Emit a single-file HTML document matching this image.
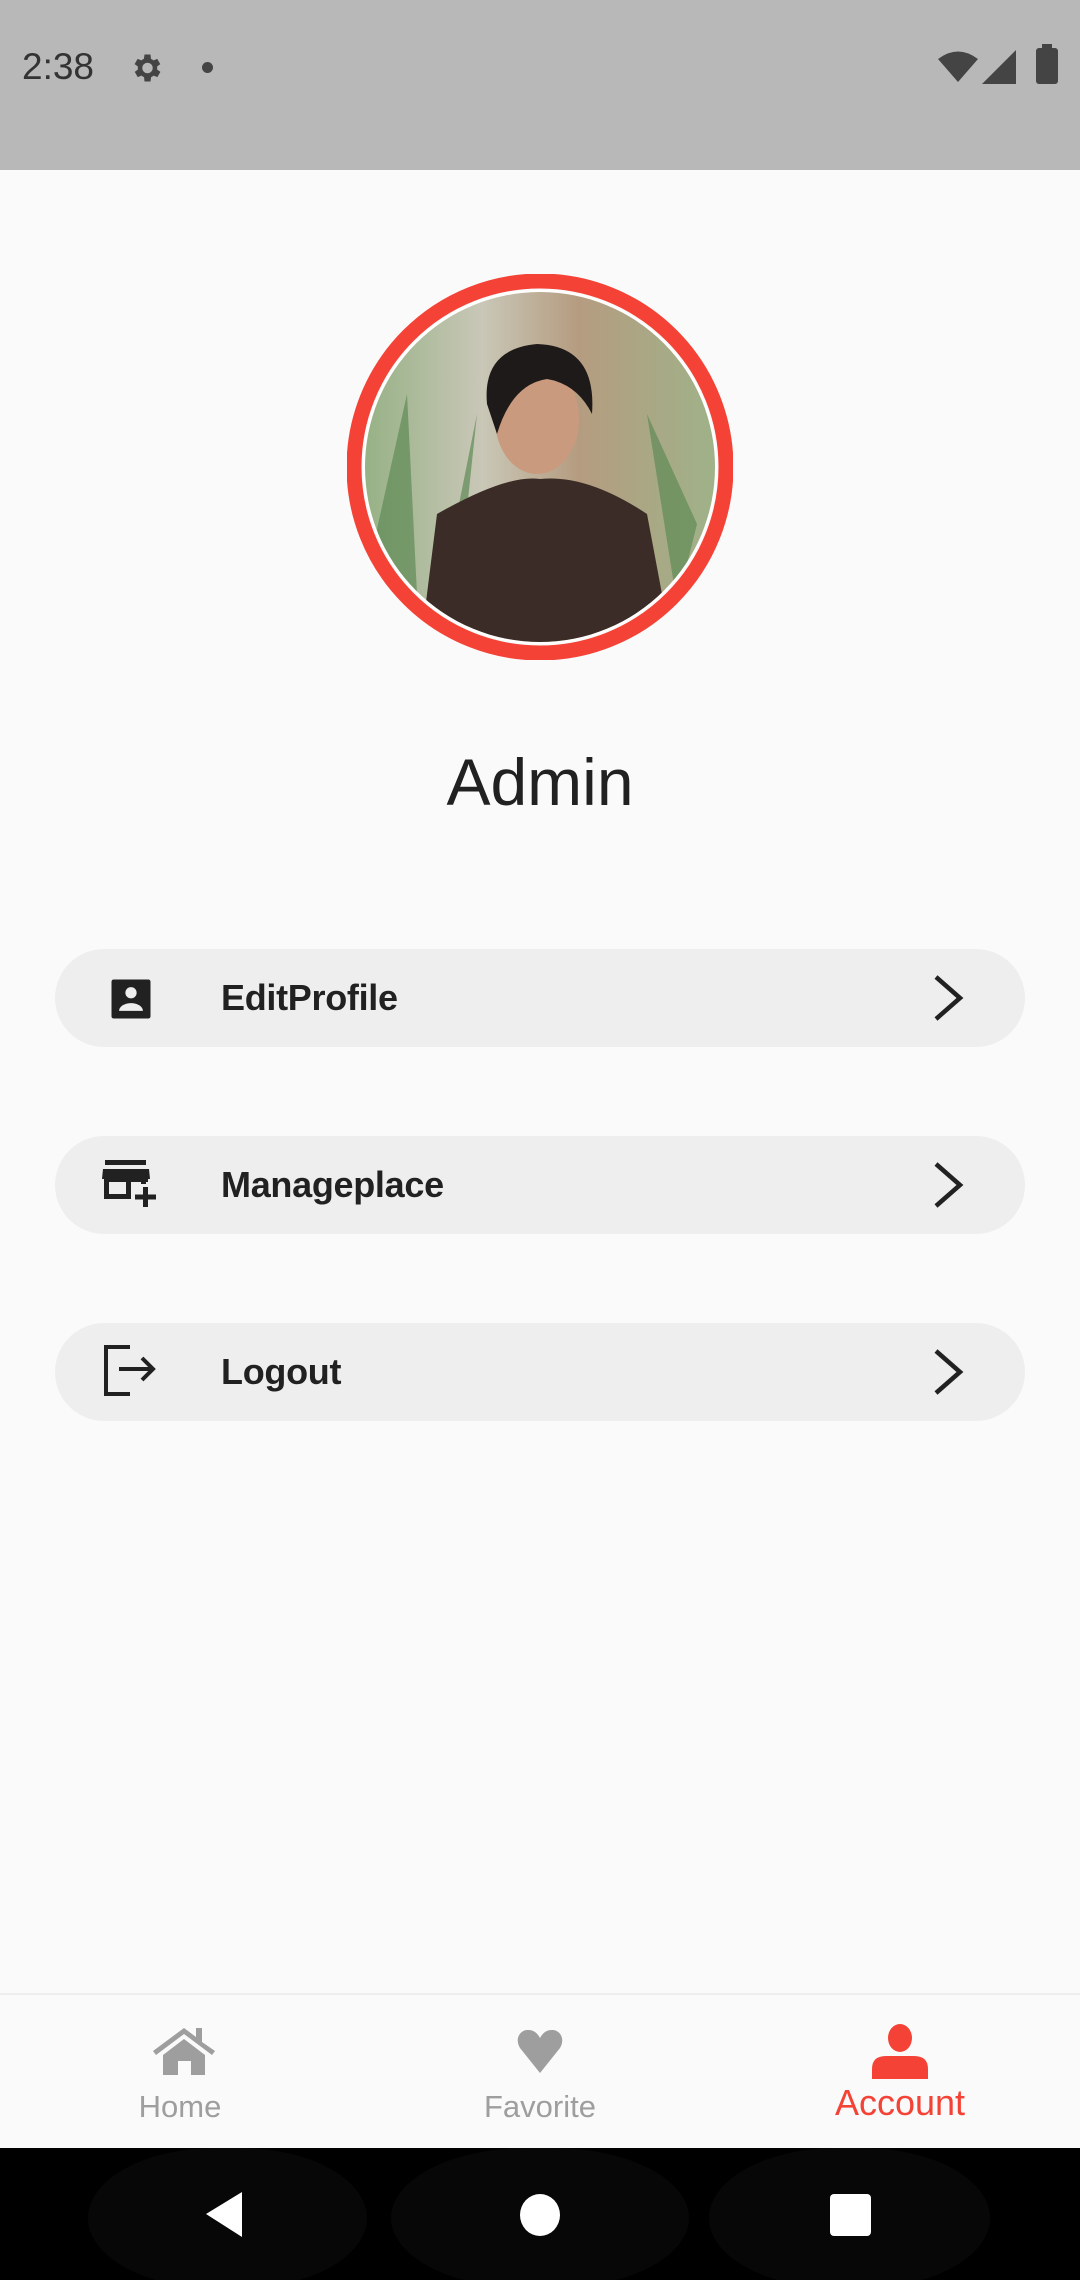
<!DOCTYPE html>
<html><head><meta charset="utf-8"><style>
*{margin:0;padding:0;box-sizing:border-box}
html,body{width:1080px;height:2280px;overflow:hidden}
body{background:#fafafa;font-family:"Liberation Sans",Roboto,sans-serif;position:relative}
.sb{position:absolute;left:0;top:0;width:1080px;height:170px;background:#b8b8b8}
.btn{position:absolute;left:55px;width:970px;height:98px;background:#eeeeee;border-radius:49px}
.btn .t{position:absolute;left:166px;top:0;line-height:98px;font-size:36px;font-weight:bold;color:#212121;letter-spacing:-0.3px}
.btn svg.ic{position:absolute;left:50px;top:24px}
.btn svg.ch{position:absolute;left:877px;top:25px}
.nav{position:absolute;left:0;top:1993px;width:1080px;height:155px;background:#fafafa;border-top:2px solid #eeeeee}
.lbl{position:absolute;font-size:31px;color:#9e9e9e;text-align:center;width:200px}
.sys{position:absolute;left:0;top:2148px;width:1080px;height:132px;background:#000;overflow:hidden}
.pill{position:absolute;top:0;height:140px;background:#070707;border-radius:50%/55%}
</style></head><body>
<div class="sb">
 <div style="position:absolute;left:22px;top:46px;font-size:37px;color:#333">2:38</div>
 <svg style="position:absolute;left:128px;top:50px" width="36" height="36" viewBox="0 0 24 24"><path fill="#444" d="M19.4 13a7.5 7.5 0 000-2l2.1-1.6-2-3.5-2.5 1a7 7 0 00-1.7-1L15 3h-4l-.4 2.9a7 7 0 00-1.7 1l-2.5-1-2 3.5L6.6 11a7.5 7.5 0 000 2l-2.1 1.6 2 3.5 2.5-1a7 7 0 001.7 1L11 21h4l.4-2.9a7 7 0 001.7-1l2.5 1 2-3.5zM13 15.5A3.5 3.5 0 1113 8.5a3.5 3.5 0 010 7z"/></svg>
 <div style="position:absolute;left:202px;top:62px;width:11px;height:11px;border-radius:50%;background:#444"></div>
 <svg style="position:absolute;left:938px;top:50px" width="40" height="34" viewBox="0 0 40 34"><path fill="#444" d="M20 32L0 9Q20-6 40 9z"/></svg>
 <svg style="position:absolute;left:982px;top:50px" width="34" height="34" viewBox="0 0 34 34"><path fill="#444" d="M34 0V34H0z"/></svg>
 <div style="position:absolute;left:1036px;top:48px;width:22px;height:36px;background:#444;border-radius:3px"></div>
 <div style="position:absolute;left:1042px;top:44px;width:10px;height:5px;background:#444"></div>
</div>

<svg style="position:absolute;left:347px;top:274px" width="386" height="386" viewBox="0 0 386 386">
 <defs><clipPath id="c"><circle cx="193" cy="193" r="175"/></clipPath>
 <linearGradient id="bg" x1="0" y1="0" x2="1" y2="0"><stop offset="0" stop-color="#8fae7e"/><stop offset=".35" stop-color="#c9c7b7"/><stop offset=".6" stop-color="#b59c80"/><stop offset="1" stop-color="#9cb58a"/></linearGradient></defs>
 <circle cx="193" cy="193" r="186" fill="none" stroke="#f44336" stroke-width="15"/>
 <circle cx="193" cy="193" r="177" fill="#fff"/>
 <g clip-path="url(#c)">
  <rect width="386" height="386" fill="url(#bg)"/>
  <path d="M20 300L60 120L70 320zM330 330L300 140L350 250zM90 340L130 140L110 330z" fill="#5f8a55" opacity=".7"/>
  <path d="M70 400L90 240Q160 200 193 205Q240 200 300 240L330 400z" fill="#3b2c27"/>
  <ellipse cx="190" cy="145" rx="42" ry="55" fill="#c99a7e"/>
  <path d="M140 130Q135 75 190 70Q250 72 245 140Q230 110 200 105Q165 110 150 160z" fill="#1f1a1a"/>
 </g>
</svg>

<div style="position:absolute;left:0;width:1080px;top:744px;text-align:center;font-size:66px;color:#212121">Admin</div>

<div class="btn" style="top:949px">
 <svg class="ic" width="52" height="52" viewBox="0 0 24 24"><path fill="#212121" d="M4 3h16a1 1 0 011 1v16a1 1 0 01-1 1H4a1 1 0 01-1-1V4a1 1 0 011-1zm8 3.5a2.6 2.6 0 100 5.2 2.6 2.6 0 000-5.2zM6.5 17.5h11c0-2.3-3-3.6-5.5-3.6s-5.5 1.3-5.5 3.6z"/></svg>
 <div class="t">EditProfile</div>
 <svg class="ch" width="34" height="48" viewBox="0 0 34 48"><path d="M4 3L28 24 4 45" fill="none" stroke="#212121" stroke-width="4.5"/></svg>
</div>
<div class="btn" style="top:1136px">
 <svg class="ic" width="64" height="56" viewBox="0 0 64 56" style="left:46px;top:20px"><rect x="4" y="4" width="41" height="5" fill="#212121"/><path d="M2 13h46l1 10H1z" fill="#212121"/><path d="M3 23h44v3H3zM3 23h5v20H3zM8 38h22v5H8zM25 23h5v15h-5zM40 23h5v5h-5z" fill="#212121"/><path d="M42 31h5v20h-5zM34 38.5h21v5H34z" fill="#212121"/></svg>
 <div class="t">Manageplace</div>
 <svg class="ch" width="34" height="48" viewBox="0 0 34 48"><path d="M4 3L28 24 4 45" fill="none" stroke="#212121" stroke-width="4.5"/></svg>
</div>
<div class="btn" style="top:1323px">
 <svg class="ic" width="64" height="56" viewBox="0 0 64 56" style="left:46px;top:20px"><path d="M29 4H5v47h24" fill="none" stroke="#212121" stroke-width="4"/><path d="M18 26h33M41 15l11 11-11 11" fill="none" stroke="#212121" stroke-width="4"/></svg>
 <div class="t">Logout</div>
 <svg class="ch" width="34" height="48" viewBox="0 0 34 48"><path d="M4 3L28 24 4 45" fill="none" stroke="#212121" stroke-width="4.5"/></svg>
</div>

<div class="nav">
 <svg style="position:absolute;left:152px;top:31px" width="64" height="50" viewBox="0 0 64 50"><path fill="#9e9e9e" d="M1 25L32 2l12 9V2h6v14l13 9-3 4L32 8 4 29zM11 29L32 13l21 16v20H39V35h-13v14H11z"/></svg>
 <div class="lbl" style="left:80px;top:94px">Home</div>
 <svg style="position:absolute;left:517px;top:35px" width="46" height="44" viewBox="0 0 46 44"><path fill="#9e9e9e" d="M23 43L3 18C-3 8 4-1 12 0c5 0 9 4 11 8C25 4 29 0 34 0c8-1 15 8 9 18z"/></svg>
 <div class="lbl" style="left:440px;top:94px">Favorite</div>
 <svg style="position:absolute;left:871px;top:28px" width="58" height="56" viewBox="0 0 58 56"><ellipse cx="29" cy="15" rx="12" ry="14" fill="#f44336"/><path d="M1 56V46q0-13 14-13h28q14 0 14 13v10z" fill="#f44336"/></svg>
 <div class="lbl" style="left:800px;top:87px;font-size:36px;color:#f44336">Account</div>
</div>

<div class="sys">
 <div class="pill" style="left:88px;width:279px"></div>
 <div class="pill" style="left:391px;width:298px"></div>
 <div class="pill" style="left:709px;width:281px"></div>
 <svg style="position:absolute;left:206px;top:44px" width="38" height="45" viewBox="0 0 38 45"><path d="M36 0V45L0 22z" fill="#fff"/></svg>
 <div style="position:absolute;left:520px;top:46px;width:40px;height:42px;border-radius:50%;background:#fff"></div>
 <div style="position:absolute;left:830px;top:46px;width:41px;height:42px;border-radius:4px;background:#fff"></div>
</div>
</body></html>
